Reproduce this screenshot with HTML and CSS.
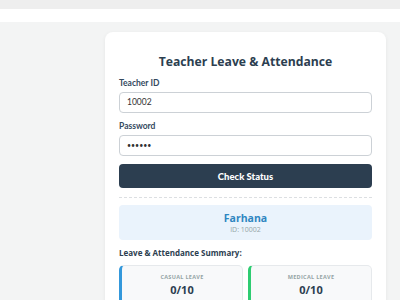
FILE: index.html
```html
<!DOCTYPE html>
<html>
<head>
<meta charset="utf-8">
<link rel="stylesheet" href="styles.css">
</head>
<body>
<div class="topbar"></div>
<div class="navbar"></div>
<main class="page">
  <section class="card">
    <h1 class="title">Teacher Leave &amp; Attendance</h1>
    <label class="label">Teacher ID</label>
    <div class="input">10002</div>
    <label class="label">Password</label>
    <div class="input pw">••••••</div>
    <button class="btn">Check Status</button>
    <hr class="divider">
    <div class="info">
      <div class="name">Farhana</div>
      <div class="idline">ID: 10002</div>
    </div>
    <div class="summary">Leave &amp; Attendance Summary:</div>
    <div class="stats">
      <div class="stat casual">
        <div class="stat-label">CASUAL LEAVE</div>
        <div class="stat-value">0/10</div>
      </div>
      <div class="stat medical">
        <div class="stat-label">MEDICAL LEAVE</div>
        <div class="stat-value">0/10</div>
      </div>
    </div>
  </section>
</main>
</body>
</html>
```
FILE: styles.css
```css
html, body { margin: 0; padding: 0; }
body {
  background: #f3f4f4;
  font-family: "Open Sans", "Noto Sans", sans-serif;
  color: #2c3e50;
  height: 300px;
  overflow: hidden;
}
.topbar { height: 9px; background: #eeeeee; }
.navbar { height: 13px; background: #ffffff; }
.page {
  padding: 10px 14px 0 105px;
}
.card {
  background: #fff;
  border-radius: 8px;
  box-shadow: 0 1px 4px rgba(0,0,0,0.06);
  padding: 21px 14px 20px 14px;
  width: 253px;
}
.title {
  margin: 0 0 6px 0;
  font-size: 12.2px;
  line-height: 18px;
  font-weight: 700;
  text-align: center;
  color: #2c3e50;
}
.label {
  display: block;
  font-family: "Lato", sans-serif;
  font-size: 8.5px;
  font-weight: 700;
  line-height: 12px;
  color: #34495e;
  margin-bottom: 3px;
}
.input {
  box-sizing: border-box;
  height: 21px;
  border: 1px solid #ccd1d6;
  border-radius: 4px;
  padding: 0 7px;
  font-family: "Lato", sans-serif;
  font-size: 8.5px;
  line-height: 19px;
  color: #333;
  margin-bottom: 7px;
}
.input.pw { margin-bottom: 8px; font-size: 7px; }
.btn {
  display: block;
  width: 100%;
  height: 24px;
  border: 0;
  border-radius: 4px;
  background: #2c3e50;
  color: #fff;
  font-family: "Lato", sans-serif;
  font-weight: 900;
  font-size: 9.5px;
  padding: 0;
}
.divider {
  border: 0;
  border-top: 1px dashed #dcdfe2;
  margin: 9px 0 7px 0;
}
.info {
  background: #eaf3fc;
  border-radius: 4px;
  height: 35px;
  box-sizing: border-box;
  padding-top: 6px;
  text-align: center;
}
.name {
  font-size: 10.5px;
  font-weight: 700;
  line-height: 14px;
  color: #2e86c1;
}
.idline {
  font-size: 7px;
  line-height: 10px;
  color: #95a5a6;
}
.summary {
  font-size: 8px;
  font-weight: 700;
  line-height: 12px;
  margin: 7px 0 6px 0;
  color: #2c3e50;
}
.stats {
  display: grid;
  grid-template-columns: 1fr 1fr;
  gap: 5px;
}
.stat {
  background: #f8f9fa;
  border: 1px solid #e6e9ec;
  border-radius: 5px;
  height: 50px;
  box-sizing: border-box;
  text-align: center;
  padding-top: 7px;
}
.casual { border-left: 3px solid #3498db; }
.medical { border-left: 3px solid #2ecc71; }
.stat-label {
  font-size: 5.5px;
  font-weight: 700;
  letter-spacing: 0.3px;
  color: #95a5a6;
  line-height: 8px;
}
.stat-value {
  font-size: 11px;
  font-weight: 700;
  line-height: 16px;
  color: #2c3e50;
  margin-top: 1px;
}
```
